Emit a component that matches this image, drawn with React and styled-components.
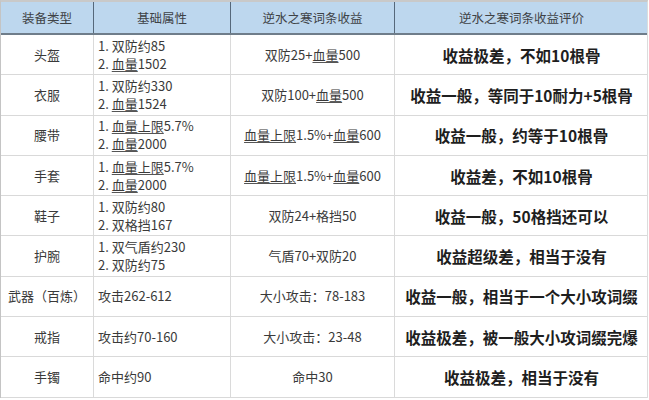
import React from 'react';
import styled, { createGlobalStyle } from 'styled-components';

const GlobalStyle = createGlobalStyle`
  html, body {
    margin: 0;
    padding: 0;
    background: #ffffff;
  }
  body {
    font-family: "Noto Sans CJK SC", "Noto Sans", sans-serif;
  }
`;

const COLS = '93px 137px 164px 253px';

const Table = styled.div`
  width: 648px;
  display: flex;
  flex-direction: column;
  border-top: 2px solid #c9c9c9;
  border-left: 1px solid #c4c4c4;
  border-right: 1px solid #dcdcdc;
  box-sizing: border-box;
`;

const HeaderRow = styled.div`
  display: grid;
  grid-template-columns: ${COLS};
  height: 31px;
  background: #bdd7ee;
  border-bottom: 2px solid #6f7d8a;
`;

const HeadCell = styled.div`
  display: flex;
  align-items: center;
  justify-content: center;
  font-size: 12.5px;
  color: #3e4246;
  border-right: ${p => (p.$last ? 'none' : '1px solid #56687a')};
`;

const BodyRow = styled.div`
  display: grid;
  grid-template-columns: ${COLS};
  height: 40.3px;
  box-sizing: border-box;
  border-bottom: 1px solid #d9d9d9;
`;

const Cell = styled.div`
  display: flex;
  flex-direction: column;
  justify-content: center;
  align-items: ${p => (p.$left ? 'flex-start' : 'center')};
  padding-left: ${p => (p.$left ? '4px' : '0')};
  font-size: ${p => (p.$bold ? '15.5px' : '13px')};
  font-weight: ${p => (p.$bold ? 700 : 400)};
  color: ${p => (p.$bold ? '#1e1e1e' : '#3a3a3a')};
  line-height: 18px;
  white-space: nowrap;
  border-right: ${p => (p.$last ? 'none' : '1px solid #dadada')};
`;

const Line = styled.div`
  white-space: nowrap;
`;

const Mark = styled.span`
  text-decoration: underline;
  text-decoration-color: #555;
  text-underline-offset: 2px;
`;

// wrap 血量 / 血量上限 with the spell-check style underline
const rich = (text) => {
  const parts = text.split(/(血量上限|血量)/);
  return parts.map((p, i) =>
    p === '血量' || p === '血量上限' ? <Mark key={i}>{p}</Mark> : <React.Fragment key={i}>{p}</React.Fragment>
  );
};

const rows = [
  { type: '头盔', base: ['1. 双防约85', '2. 血量1502'], gain: '双防25+血量500', rate: '收益极差，不如10根骨' },
  { type: '衣服', base: ['1. 双防约330', '2. 血量1524'], gain: '双防100+血量500', rate: '收益一般，等同于10耐力+5根骨' },
  { type: '腰带', base: ['1. 血量上限5.7%', '2. 血量2000'], gain: '血量上限1.5%+血量600', rate: '收益一般，约等于10根骨' },
  { type: '手套', base: ['1. 血量上限5.7%', '2. 血量2000'], gain: '血量上限1.5%+血量600', rate: '收益差，不如10根骨' },
  { type: '鞋子', base: ['1. 双防约80', '2. 双格挡167'], gain: '双防24+格挡50', rate: '收益一般，50格挡还可以' },
  { type: '护腕', base: ['1. 双气盾约230', '2. 双防约75'], gain: '气盾70+双防20', rate: '收益超级差，相当于没有' },
  { type: '武器（百炼）', base: ['攻击262-612'], gain: '大小攻击：78-183', rate: '收益一般，相当于一个大小攻词缀' },
  { type: '戒指', base: ['攻击约70-160'], gain: '大小攻击：23-48', rate: '收益极差，被一般大小攻词缀完爆' },
  { type: '手镯', base: ['命中约90'], gain: '命中30', rate: '收益极差，相当于没有' },
];

export default function App() {
  return (
    <>
      <GlobalStyle />
      <Table>
        <HeaderRow>
          <HeadCell>装备类型</HeadCell>
          <HeadCell>基础属性</HeadCell>
          <HeadCell>逆水之寒词条收益</HeadCell>
          <HeadCell $last>逆水之寒词条收益评价</HeadCell>
        </HeaderRow>
        {rows.map(r => (
          <BodyRow key={r.type}>
            <Cell>{r.type}</Cell>
            <Cell $left>
              {r.base.map(line => (
                <Line key={line}>{rich(line)}</Line>
              ))}
            </Cell>
            <Cell>
              <Line>{rich(r.gain)}</Line>
            </Cell>
            <Cell $bold $last>{r.rate}</Cell>
          </BodyRow>
        ))}
      </Table>
    </>
  );
}
